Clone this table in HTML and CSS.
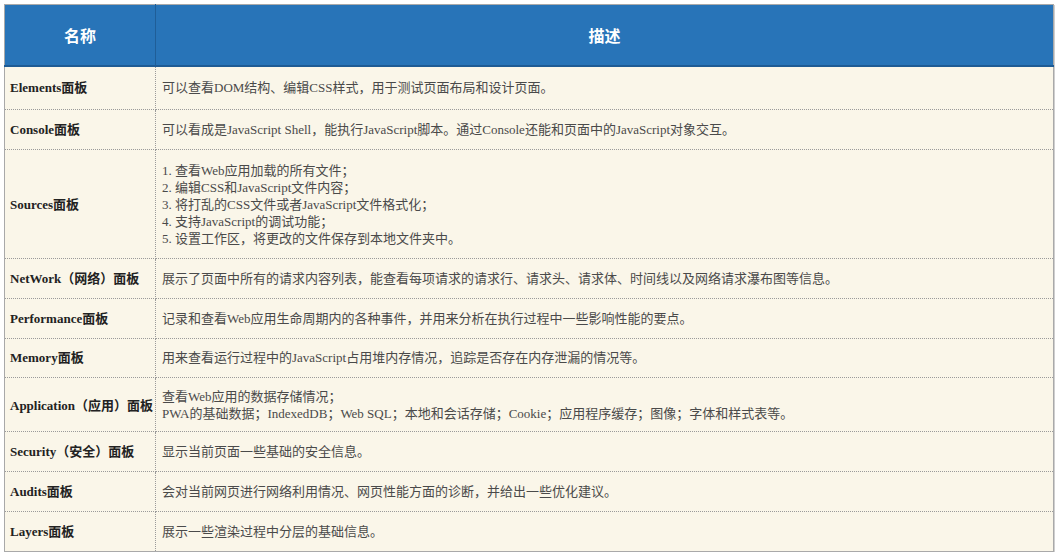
FILE: index.html
```html
<!DOCTYPE html>
<html lang="zh-CN">
<head>
<meta charset="utf-8">
<title>DevTools 面板</title>
<link rel="stylesheet" href="styles.css">
</head>
<body>
<table class="panels">
  <thead>
    <tr>
      <th class="col-name">名称</th>
      <th class="col-desc">描述</th>
    </tr>
  </thead>
  <tbody>
    <tr class="row-1">
      <td class="name">Elements面板</td>
      <td class="desc">可以查看DOM结构、编辑CSS样式，用于测试页面布局和设计页面。</td>
    </tr>
    <tr>
      <td class="name">Console面板</td>
      <td class="desc">可以看成是JavaScript Shell，能执行JavaScript脚本。通过Console还能和页面中的JavaScript对象交互。</td>
    </tr>
    <tr class="row-list">
      <td class="name">Sources面板</td>
      <td class="desc">1. 查看Web应用加载的所有文件；<br>2. 编辑CSS和JavaScript文件内容；<br>3. 将打乱的CSS文件或者JavaScript文件格式化；<br>4. 支持JavaScript的调试功能；<br>5. 设置工作区，将更改的文件保存到本地文件夹中。</td>
    </tr>
    <tr>
      <td class="name">NetWork（网络）面板</td>
      <td class="desc">展示了页面中所有的请求内容列表，能查看每项请求的请求行、请求头、请求体、时间线以及网络请求瀑布图等信息。</td>
    </tr>
    <tr>
      <td class="name">Performance面板</td>
      <td class="desc">记录和查看Web应用生命周期内的各种事件，并用来分析在执行过程中一些影响性能的要点。</td>
    </tr>
    <tr class="row-short">
      <td class="name">Memory面板</td>
      <td class="desc">用来查看运行过程中的JavaScript占用堆内存情况，追踪是否存在内存泄漏的情况等。</td>
    </tr>
    <tr class="row-two">
      <td class="name">Application（应用）面板</td>
      <td class="desc">查看Web应用的数据存储情况；<br>PWA的基础数据；IndexedDB；Web SQL；本地和会话存储；Cookie；应用程序缓存；图像；字体和样式表等。</td>
    </tr>
    <tr>
      <td class="name">Security（安全）面板</td>
      <td class="desc">显示当前页面一些基础的安全信息。</td>
    </tr>
    <tr>
      <td class="name">Audits面板</td>
      <td class="desc">会对当前网页进行网络利用情况、网页性能方面的诊断，并给出一些优化建议。</td>
    </tr>
    <tr>
      <td class="name">Layers面板</td>
      <td class="desc">展示一些渲染过程中分层的基础信息。</td>
    </tr>
  </tbody>
</table>
</body>
</html>
```

FILE: styles.css
```css
html, body {
  margin: 0;
  padding: 0;
  background: #ffffff;
}

body {
  padding: 4px 0 0 4px;
}

.panels {
  width: 1050px;
  border-collapse: collapse;
  table-layout: fixed;
  background: #faf6e9;
  border: 1px solid #a9a9a9;
  box-shadow: 1px 1px 0 #cfcfcf;
  font-family: "Liberation Serif", "Noto Sans CJK SC", serif;
  font-size: 13px;
  line-height: 17px;
}

.panels th {
  background: #2874b8;
  color: #ffffff;
  font-family: "Noto Sans CJK SC", "Noto Sans", sans-serif;
  font-weight: bold;
  font-size: 16px;
  height: 60px;
  padding: 0;
  text-align: center;
  vertical-align: middle;
  border-bottom: 2px solid #1e5b94;
}

.panels th.col-name {
  width: 150px;
  border-right: 1px solid #1f5e98;
}

.panels td {
  height: 17px;
  padding: 11px 6px 11px 5px;
  vertical-align: middle;
  border-bottom: 1px dotted #9a9a9a;
}

.panels tbody tr:last-child td {
  border-bottom: none;
}

.panels td.name {
  font-weight: bold;
  color: #222222;
  white-space: nowrap;
  padding-right: 2px;
  border-right: 1px dotted #9a9a9a;
}

.panels td.desc {
  color: #4a4a4a;
  padding-left: 6px;
}

.panels tr.row-1 td {
  padding-top: 12px;
  padding-bottom: 13px;
}

.panels tr.row-list td {
  padding-top: 12px;
  padding-bottom: 11px;
}

.panels tr.row-short td {
  padding-top: 10px;
  padding-bottom: 11px;
}

.panels tr.row-two td {
  padding-top: 10px;
  padding-bottom: 9px;
}
```
